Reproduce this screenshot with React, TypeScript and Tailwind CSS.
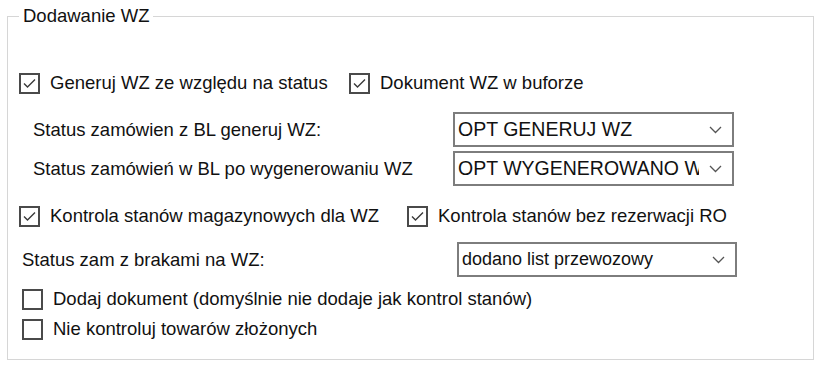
import type { ReactNode } from "react";

function Check({ checked }: { checked: boolean }) {
  return (
    <div className="w-[21px] h-[21px] border-2 border-[#4a4a4a] bg-white flex items-center justify-center shrink-0">
      {checked && (
        <svg width="15" height="15" viewBox="0 0 15 15">
          <polyline
            points="2,7.5 5.5,11 13,3.5"
            fill="none"
            stroke="#3a3a3a"
            strokeWidth="1.4"
          />
        </svg>
      )}
    </div>
  );
}

function CheckItem({
  checked,
  label,
  className = "",
}: {
  checked: boolean;
  label: string;
  className?: string;
}) {
  return (
    <div className={`flex items-center ${className}`}>
      <Check checked={checked} />
      <span className="ml-[10px] whitespace-nowrap">{label}</span>
    </div>
  );
}

function Combo({
  value,
  className = "",
  textClass = "text-[18px]",
}: {
  value: string;
  className?: string;
  textClass?: string;
}) {
  return (
    <div
      className={`h-[35px] border-2 border-[#7d7d7d] bg-white flex items-center pl-[3px] pr-[10px] ${textClass} ${className}`}
    >
      <span className="flex-1 overflow-hidden whitespace-nowrap">{value}</span>
      <svg width="13" height="8" viewBox="0 0 13 8" className="ml-[10px] shrink-0">
        <polyline
          points="1,1 6.5,6.5 12,1"
          fill="none"
          stroke="#555"
          strokeWidth="1.3"
        />
      </svg>
    </div>
  );
}

function Row({ children, className = "" }: { children: ReactNode; className?: string }) {
  return <div className={`flex items-center ${className}`}>{children}</div>;
}

export default function App() {
  return (
    <div
      className="w-[821px] h-[367px] bg-white text-[18.5px] text-[#111] overflow-hidden"
      style={{ fontFamily: '"Liberation Sans", Arial, sans-serif' }}
    >
      <fieldset className="ml-[7px] mt-[5px] w-[807px] h-[355px] border border-[#d6d6d6]">
        <legend className="ml-[11px] px-[4px] leading-[22px]">Dodawanie WZ</legend>

        <Row className="mt-[45px] h-[22px] pl-[11px]">
          <CheckItem checked className="w-[330px]" label="Generuj WZ ze względu na status" />
          <CheckItem checked label="Dokument WZ w buforze" />
        </Row>

        <Row className="mt-[18px] pl-[25px]">
          <span className="w-[420px] whitespace-nowrap">Status zamówien z BL generuj WZ:</span>
          <Combo value="OPT GENERUJ WZ" className="w-[281px]" textClass="text-[19.5px]" />
        </Row>

        <Row className="mt-[4px] pl-[25px]">
          <span className="w-[420px] whitespace-nowrap">Status zamówień w BL po wygenerowaniu WZ</span>
          <Combo value="OPT WYGENEROWANO WZ" className="w-[281px]" textClass="text-[19.5px]" />
        </Row>

        <Row className="mt-[19px] h-[22px] pl-[11px]">
          <CheckItem checked className="w-[388px]" label="Kontrola stanów magazynowych dla WZ" />
          <CheckItem checked label="Kontrola stanów bez rezerwacji RO" />
        </Row>

        <Row className="mt-[15px] pl-[14px]">
          <span className="w-[435px] whitespace-nowrap">Status zam z brakami na WZ:</span>
          <Combo value="dodano list przewozowy" className="w-[280px]" />
        </Row>

        <Row className="mt-[11px] h-[22px] pl-[14px]">
          <CheckItem checked={false} label="Dodaj dokument (domyślnie nie dodaje jak kontrol stanów)" />
        </Row>

        <Row className="mt-[8px] h-[22px] pl-[14px]">
          <CheckItem checked={false} label="Nie kontroluj towarów złożonych" />
        </Row>
      </fieldset>
    </div>
  );
}
